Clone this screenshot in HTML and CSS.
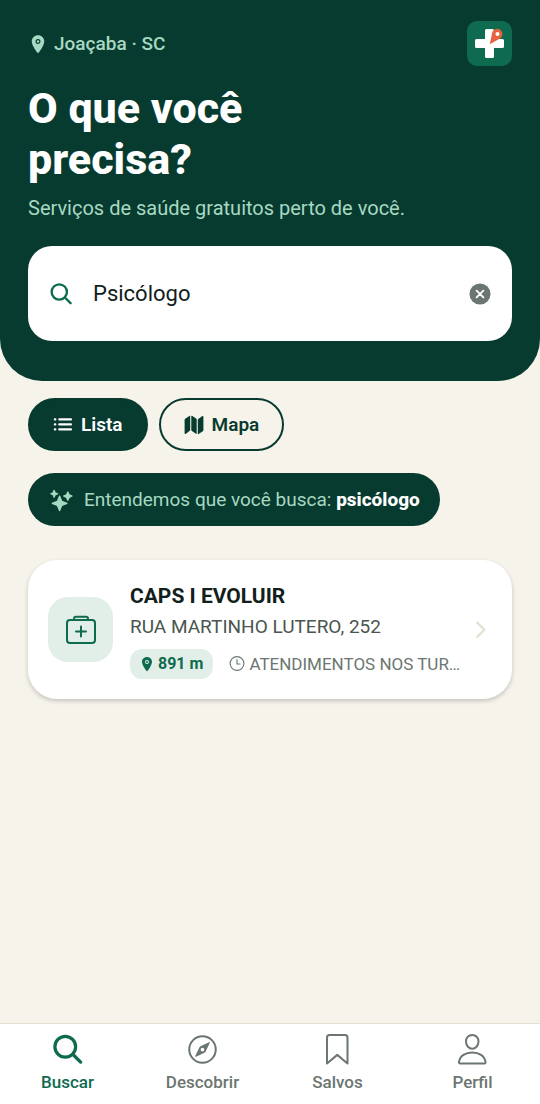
FILE: index.html
```html
<!DOCTYPE html>
<html lang="pt-BR">
<head>
<meta charset="utf-8">
<meta name="viewport" content="width=device-width, initial-scale=1">
<title>Buscar serviços de saúde</title>
<link rel="stylesheet" href="styles.css">
</head>
<body>
<div class="app">
  <header class="hero">
    <div class="hero-top">
      <div class="place">
        <svg class="icon icon-sm" viewBox="0 0 512 512" aria-hidden="true"><path fill="currentColor" d="M256 32c-88.22 0-160 68.65-160 153 0 40.17 18.31 93.59 54.42 158.78 29 52.34 62.55 99.67 80 123.22a31.75 31.75 0 0051.22 0c17.42-23.55 51-70.88 80-123.22C397.69 278.61 416 225.19 416 185c0-84.35-71.78-153-160-153zm0 224a64 64 0 1164-64 64.07 64.07 0 01-64 64z"/><circle fill="currentColor" cx="256" cy="192" r="32"/></svg>
        <span>Joaçaba · SC</span>
      </div>
      <svg class="logo" viewBox="0 0 45 45" role="img" aria-label="Logo">
        <rect width="45" height="45" rx="10" fill="#0f6b4f"/>
        <path fill="#fff" d="M19.500 8h6a1.500 1.500 0 0 1 1.500 1.500V18h8.500a1.500 1.500 0 0 1 1.500 1.500v6a1.500 1.500 0 0 1-1.500 1.500H27v8.500a1.500 1.500 0 0 1-1.500 1.500h-6a1.500 1.500 0 0 1-1.500-1.500V27H9.500A1.500 1.500 0 0 1 8 25.500v-6A1.500 1.500 0 0 1 9.500 18H18V9.500A1.500 1.500 0 0 1 19.500 8z"/>
        <path fill="#e5633f" d="M22.800 23.300L25 12.600A5.200 5.200 0 1 1 32.500 17.700z"/>
        <circle cx="30.500" cy="12.900" r="2" fill="#fff"/>
      </svg>
    </div>
    <h1 class="title">O que você<br>precisa?</h1>
    <p class="subtitle">Serviços de saúde gratuitos perto de você.</p>
    <form class="search">
      <svg class="icon search-icon" viewBox="0 0 512 512" aria-hidden="true"><g fill="none" stroke="currentColor" stroke-width="54" stroke-linecap="round"><circle cx="216" cy="208" r="178"/><path d="M346 338l132 132"/></g></svg>
      <input class="search-input" type="text" value="Psicólogo" aria-label="Buscar serviço">
      <button class="clear" type="button" aria-label="Limpar busca">
        <svg class="icon clear-icon" viewBox="0 0 24 24" aria-hidden="true"><circle cx="12" cy="12" r="11.500" fill="currentColor"/><path d="M8.300 8.300l7.400 7.400M15.700 8.300l-7.400 7.400" stroke="#fff" stroke-width="2" stroke-linecap="round"/></svg>
      </button>
    </form>
  </header>

  <main class="content">
    <div class="views">
      <button class="view view-active" type="button">
        <svg class="icon icon-md" viewBox="0 0 512 512" aria-hidden="true"><g fill="none" stroke="currentColor" stroke-width="54" stroke-linecap="round"><path d="M160 112h300M160 240h300M160 368h300"/><path d="M46 112h14M46 240h14M46 368h14"/></g></svg>
        <span>Lista</span>
      </button>
      <button class="view" type="button">
        <svg class="icon icon-md" viewBox="0 0 20 20" aria-hidden="true"><path fill="currentColor" d="M.6 4.800Q.6 4.100 1.200 3.700L5.400 1Q6.200.6 6.200 1.400V14.800Q6.200 15.500 5.700 15.800L2 18.700Q.6 19.400.6 18zM7.300 1.200Q7.300.4 8 .8L12.100 3.500Q12.700 3.900 12.700 4.500V18.300Q12.700 19.200 12 18.800L7.900 16.100Q7.300 15.700 7.300 15.100zM13.800 4.900Q13.800 4.300 14.300 3.900L18 1.200Q19.400.4 19.400 1.800V15.100Q19.400 15.800 18.800 16.200L14.600 19Q13.800 19.400 13.800 18.600z"/></svg>
        <span>Mapa</span>
      </button>
    </div>

    <p class="hint">
      <svg class="icon hint-icon" viewBox="0 0 24 24" aria-hidden="true"><g fill="currentColor" stroke="currentColor" stroke-width="1.200" stroke-linejoin="round"><path d="M10 7.300L12.300 12.700L17.700 15L12.300 17.300L10 22.700L7.700 17.300L2.300 15L7.700 12.700z"/><path d="M4.300 1.300L5.400 3.900L8 5L5.400 6.100L4.300 8.700L3.200 6.100L.8 5L3.200 3.900z"/><path d="M18.600 3L20 6L23 7.400L20 8.800L18.600 11.800L17.200 8.800L14.200 7.400L17.200 6z"/></g></svg>
      <span>Entendemos que você busca: <strong class="hint-term">psicólogo</strong></span>
    </p>

    <a class="card" href="#">
      <span class="card-badge">
        <svg class="icon icon-lg" viewBox="0 0 512 512" aria-hidden="true"><g fill="none" stroke="currentColor" stroke-width="32" stroke-linecap="round" stroke-linejoin="round"><rect x="32" y="96" width="448" height="368" rx="48"/><path d="M144 96V74a32 32 0 0132-32h160a32 32 0 0132 32v22M256 200v160M336 280H176"/></g></svg>
      </span>
      <span class="card-body">
        <strong class="card-title">CAPS I EVOLUIR</strong>
        <span class="card-address">RUA MARTINHO LUTERO, 252</span>
        <span class="card-meta">
          <span class="distance">
            <svg class="icon icon-xs" viewBox="0 0 512 512" aria-hidden="true"><path fill="currentColor" d="M256 32c-88.22 0-160 68.65-160 153 0 40.17 18.31 93.59 54.42 158.78 29 52.34 62.55 99.67 80 123.22a31.75 31.75 0 0051.22 0c17.42-23.55 51-70.88 80-123.22C397.69 278.61 416 225.19 416 185c0-84.35-71.78-153-160-153zm0 224a64 64 0 1164-64 64.07 64.07 0 01-64 64z"/><circle fill="currentColor" cx="256" cy="192" r="32"/></svg>
            <span>891 m</span>
          </span>
          <span class="hours">
            <svg class="icon icon-xs" viewBox="0 0 512 512" aria-hidden="true"><g fill="none" stroke="currentColor" stroke-width="36" stroke-linecap="round" stroke-linejoin="round"><circle cx="256" cy="240" r="220"/><path d="M256 112v144h96"/></g></svg>
            <span>ATENDIMENTOS NOS TUR…</span>
          </span>
        </span>
      </span>
      <svg class="icon chevron" viewBox="0 0 512 512" aria-hidden="true"><path fill="none" stroke="currentColor" stroke-width="56" stroke-linecap="round" stroke-linejoin="round" d="M170 86l164 164-164 164"/></svg>
    </a>
  </main>

  <nav class="tabs">
    <a class="tab tab-active" href="#" aria-current="page">
      <svg class="icon icon-lg" viewBox="0 0 512 512" aria-hidden="true"><g fill="none" stroke="currentColor" stroke-width="52" stroke-linecap="round"><circle cx="212" cy="220" r="166"/><path d="M336 344l122 122"/></g></svg>
      <span>Buscar</span>
    </a>
    <a class="tab" href="#">
      <svg class="icon icon-lg" viewBox="0 0 512 512" aria-hidden="true"><circle cx="248" cy="264" r="212" fill="none" stroke="currentColor" stroke-width="32"/><path fill="currentColor" fill-rule="evenodd" d="M352 146L216 212Q203 219 197 232L132 368Q128 384 144 380L280 315Q293 309 299 296L364 160Q368 142 352 146zM248 234a30 30 0 1 0 0 60a30 30 0 1 0 0-60z"/></svg>
      <span>Descobrir</span>
    </a>
    <a class="tab" href="#">
      <svg class="icon icon-lg" viewBox="0 0 512 512" aria-hidden="true"><path fill="none" stroke="currentColor" stroke-width="32" stroke-linecap="round" stroke-linejoin="round" d="M368 32H120a40 40 0 00-40 40v416l164-138 164 138V72a40 40 0 00-40-40z"/></svg>
      <span>Salvos</span>
    </a>
    <a class="tab" href="#">
      <svg class="icon icon-lg" viewBox="0 0 512 512" aria-hidden="true"><g fill="none" stroke="currentColor" stroke-width="32" stroke-linecap="round" stroke-linejoin="round"><path d="M344 142c-4 60-46 110-100 110s-96-50-100-110C140 78 184 32 244 32s104 47 100 110z"/><path d="M244 312c-104 0-200 50-212 152-2 14 6 24 18 24h388c12 0 20-10 18-24-12-102-108-152-212-152z"/></g></svg>
      <span>Perfil</span>
    </a>
  </nav>
</div>
</body>
</html>
```
FILE: styles.css
```css
:root {
  --forest: #083b2f;
  --green: #0f6b4f;
  --mint: #a6d9c2;
  --mint-soft: #e1efe8;
  --cream: #f6f3eb;
  --line: #e6e2d2;
  --ink: #12201b;
  --ink-soft: #4a5550;
  --muted: #6b7671;
}

* {
  box-sizing: border-box;
}

body {
  margin: 0;
  background: var(--cream);
  color: var(--ink);
  font-family: Roboto, "Liberation Sans", sans-serif;
}

a {
  color: inherit;
  text-decoration: none;
}

button {
  border: 0;
  background: none;
  font: inherit;
  cursor: pointer;
}

.app {
  display: flex;
  flex-direction: column;
  min-height: 100vh;
}

.icon {
  display: block;
  flex: none;
}

.icon-xs {
  width: 16px;
  height: 16px;
}

.icon-sm {
  width: 20px;
  height: 20px;
}

.icon-md {
  width: 20px;
  height: 20px;
}

.icon-lg {
  width: 32px;
  height: 32px;
}

.hero {
  padding: 21px 28px 40px;
  border-radius: 0 0 42px 42px;
  background: var(--forest);
}

.hero-top {
  display: flex;
  align-items: center;
  justify-content: space-between;
}

.place {
  display: flex;
  align-items: center;
  gap: 6px;
  color: var(--mint);
  font-size: 19px;
  font-weight: 500;
  line-height: 25px;
}

.logo {
  display: block;
  width: 45px;
  height: 45px;
}

.title {
  margin: 17px 0 0;
  color: #fff;
  font-size: 43px;
  font-weight: 800;
  line-height: 51px;
}

.subtitle {
  margin: 9px 0 0;
  color: var(--mint);
  font-size: 20px;
  line-height: 28px;
}

.search {
  display: flex;
  align-items: center;
  height: 95px;
  margin: 24px 0 0;
  padding: 0 21px 0 22px;
  border-radius: 24px;
  background: #fff;
}

.search-icon {
  width: 22px;
  height: 22px;
  color: var(--green);
}

.search-input {
  flex: 1;
  min-width: 0;
  margin: 0 16px 0 21px;
  padding: 0;
  border: 0;
  outline: 0;
  background: none;
  color: var(--ink);
  font: inherit;
  font-size: 22px;
  line-height: 28px;
}

.clear {
  padding: 0;
  color: var(--muted);
}

.clear-icon {
  width: 22px;
  height: 22px;
}

.content {
  display: flex;
  flex: 1;
  flex-direction: column;
  align-items: flex-start;
  padding: 17px 28px 28px;
}

.views {
  display: flex;
  gap: 11px;
}

.view {
  display: flex;
  align-items: center;
  gap: 8px;
  padding: 12px 23px;
  border: 2px solid var(--forest);
  border-radius: 27px;
  color: var(--forest);
  font-size: 19px;
  font-weight: 600;
  line-height: 25px;
}

.view-active {
  background: var(--forest);
  color: #fff;
}

.hint {
  display: flex;
  align-items: center;
  gap: 11px;
  margin: 22px 0 0;
  padding: 14px 20px 13px 22px;
  border-radius: 27px;
  background: var(--forest);
  color: var(--mint);
  font-size: 19px;
  line-height: 26px;
}

.hint-icon {
  width: 23px;
  height: 23px;
}

.hint-term {
  color: #fff;
  font-weight: 800;
}

.card {
  display: flex;
  align-items: center;
  align-self: stretch;
  gap: 17px;
  margin-top: 34px;
  padding: 20px;
  border-radius: 29px;
  background: #fff;
  box-shadow: 0 2px 4px rgb(18 32 27 / 22%);
}

.card-badge {
  display: grid;
  flex: none;
  place-items: center;
  width: 65px;
  height: 65px;
  border-radius: 20px;
  background: var(--mint-soft);
  color: var(--green);
}

.card-body {
  display: flex;
  flex: 1;
  flex-direction: column;
  min-width: 0;
}

.card-title {
  font-size: 21px;
  font-weight: 700;
  line-height: 32px;
}

.card-address {
  color: var(--ink-soft);
  font-size: 19px;
  line-height: 30px;
}

.card-meta {
  display: flex;
  align-items: center;
  gap: 16px;
  margin-top: 7px;
}

.distance {
  display: flex;
  flex: none;
  align-items: center;
  gap: 3px;
  padding: 4px 10px 4px 9px;
  border-radius: 12px;
  background: var(--mint-soft);
  color: var(--green);
  font-size: 16px;
  font-weight: 700;
  line-height: 22px;
}

.hours {
  display: flex;
  align-items: center;
  gap: 4px;
  color: var(--muted);
  font-size: 17px;
  line-height: 22px;
  white-space: nowrap;
}

.chevron {
  width: 22px;
  height: 22px;
  margin-left: -12px;
  color: var(--line);
}

.tabs {
  display: grid;
  grid-template-columns: repeat(4, 1fr);
  border-top: 1px solid var(--line);
  background: #fff;
}

.tab {
  display: flex;
  flex-direction: column;
  align-items: center;
  gap: 6px;
  padding: 9px 0 11px;
  color: var(--muted);
  font-size: 17px;
  font-weight: 500;
  line-height: 22px;
}

.tab-active {
  color: var(--green);
}
```
